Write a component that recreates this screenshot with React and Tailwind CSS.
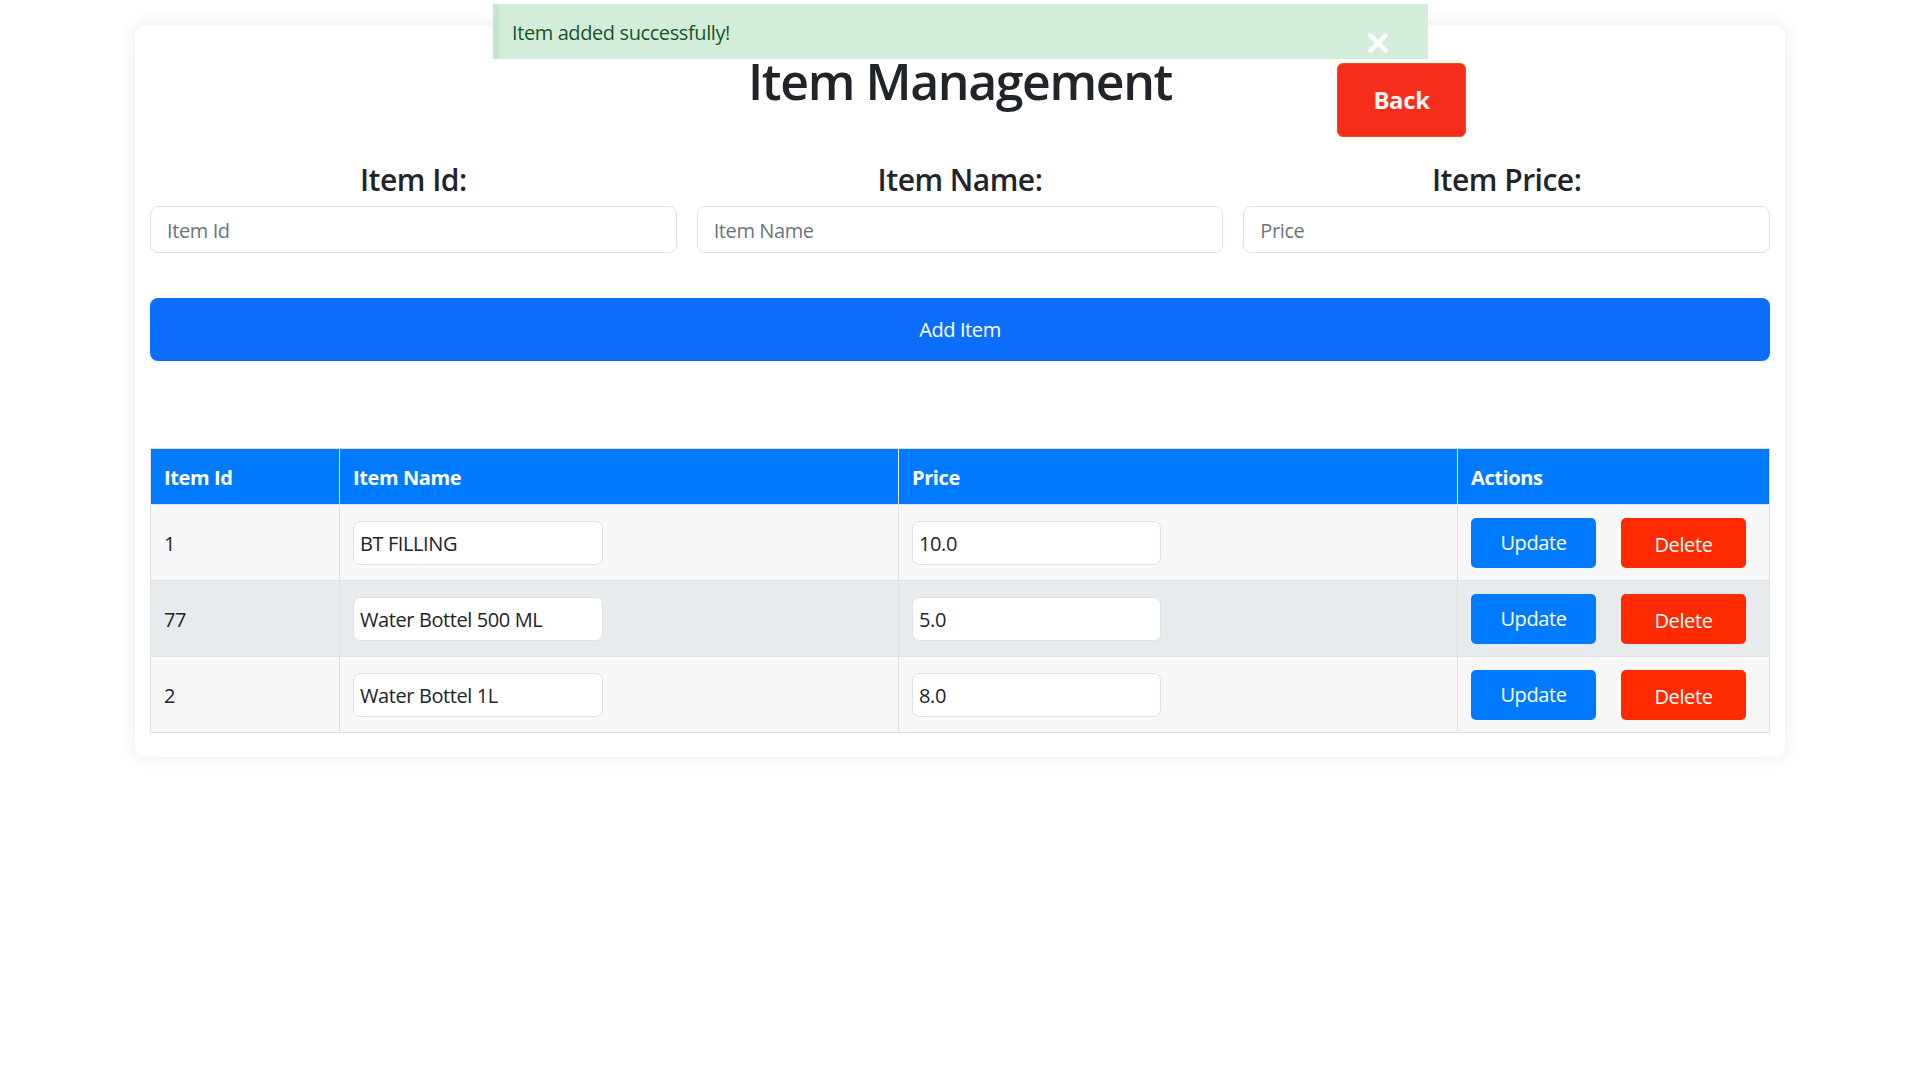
import React from 'react';

const items = [
  { id: '1', name: 'BT FILLING', price: '10.0' },
  { id: '77', name: 'Water Bottel 500 ML', price: '5.0' },
  { id: '2', name: 'Water Bottel 1L', price: '8.0' },
];

function CloseIcon() {
  return (
    <svg width="24" height="24" viewBox="0 0 24 24" fill="none">
      <path d="M3 3L21 21M21 3L3 21" stroke="white" strokeWidth="4.5" />
    </svg>
  );
}

export default function App() {
  return (
    <div className="relative min-h-screen bg-white pt-[25px] text-[#212529] font-['Open_Sans',_'Noto_Sans',_sans-serif]">
      {/* toast */}
      <div className="absolute top-[4px] left-[493px] w-[935px] h-[55px] bg-[#d4edda] border-l-[6px] border-[#c3e6cb] flex items-start z-10">
        <span className="mt-[15px] ml-[13px] text-[20px] leading-[28px] tracking-[-0.4px] text-[#155724]">Item added successfully!</span>
        <button className="ml-auto mr-[38px] mt-[27px]">
          <CloseIcon />
        </button>
      </div>

      <div className="mx-auto w-[1650px] rounded-[10px] bg-white shadow-[0_0_18px_rgba(0,0,0,0.09)] px-[15px] pt-[26px] pb-[24px]">
        <div className="grid grid-cols-[1fr_500px_1fr] items-start">
          <div />
          <h1 className="text-center text-[50px] leading-[60px] font-semibold tracking-[-1.4px] text-[#212529]">Item Management</h1>
          <div>
            <button className="ml-[127px] mt-[12px] w-[129px] h-[74px] rounded-[6px] bg-[#f42e1b] border border-[#ff4a10] text-[24px] font-bold text-[#f4f4f4] tracking-[-0.4px]">
              Back
            </button>
          </div>
        </div>

        <div className="grid grid-cols-3 gap-x-[20px] mt-[25px]">
          {[
            ['Item Id:', 'Item Id'],
            ['Item Name:', 'Item Name'],
            ['Item Price:', 'Price'],
          ].map(([label, ph]) => (
            <div key={label}>
              <h4 className="text-center text-[30px] leading-[36px] font-semibold tracking-[-0.5px] mb-[8px]">{label}</h4>
              <input
                placeholder={ph}
                className="w-full h-[47px] rounded-[8px] border border-[#dee2e6] px-[16px] pt-[2px] text-[20px] tracking-[-0.4px] placeholder:text-[#6c757d] outline-none"
              />
            </div>
          ))}
        </div>

        <button className="mt-[45px] w-full h-[63px] rounded-[8px] bg-[#0d6efd] text-white text-[20px] tracking-[-0.4px]">
          Add Item
        </button>

        <table className="mt-[87px] w-full table-fixed border-collapse border border-[#dee2e6] text-[20px] tracking-[-0.4px]">
          <colgroup>
            <col className="w-[189px]" />
            <col className="w-[559px]" />
            <col className="w-[559px]" />
            <col />
          </colgroup>
          <thead>
            <tr className="bg-[#007bff] text-white h-[56px]">
              <th className="text-left font-bold px-[13px] pt-[2px] border-r border-[#e6e9ed]">Item Id</th>
              <th className="text-left font-bold px-[13px] pt-[2px] border-r border-[#e6e9ed]">Item Name</th>
              <th className="text-left font-bold px-[13px] pt-[2px] border-r border-[#e6e9ed]">Price</th>
              <th className="text-left font-bold px-[13px] pt-[2px]">Actions</th>
            </tr>
          </thead>
          <tbody>
            {items.map((it, i) => (
              <tr key={it.id} className={`h-[76px] border-t border-[#dee2e6] ${i % 2 === 1 ? 'bg-[#e8ebee]' : 'bg-[#f8f8f8]'}`}>
                <td className="px-[13px] pt-[2px] border-r border-[#dee2e6]">{it.id}</td>
                <td className="px-[13px] border-r border-[#dee2e6]">
                  <input
                    defaultValue={it.name}
                    className="w-[250px] h-[44px] rounded-[7px] border border-[#dee2e6] bg-white px-[6px] pt-[2px] outline-none"
                  />
                </td>
                <td className="px-[13px] border-r border-[#dee2e6]">
                  <input
                    defaultValue={it.price}
                    className="w-[249px] h-[44px] rounded-[7px] border border-[#dee2e6] bg-white px-[6px] pt-[2px] outline-none"
                  />
                </td>
                <td className="px-[13px]">
                  <div className="flex gap-[25px]">
                    <button className="w-[125px] h-[50px] rounded-[5px] bg-[#007bff] text-white">Update</button>
                    <button className="w-[125px] h-[50px] rounded-[5px] bg-[#ff2a00] text-white pt-[4px]">Delete</button>
                  </div>
                </td>
              </tr>
            ))}
          </tbody>
        </table>
      </div>
    </div>
  );
}
